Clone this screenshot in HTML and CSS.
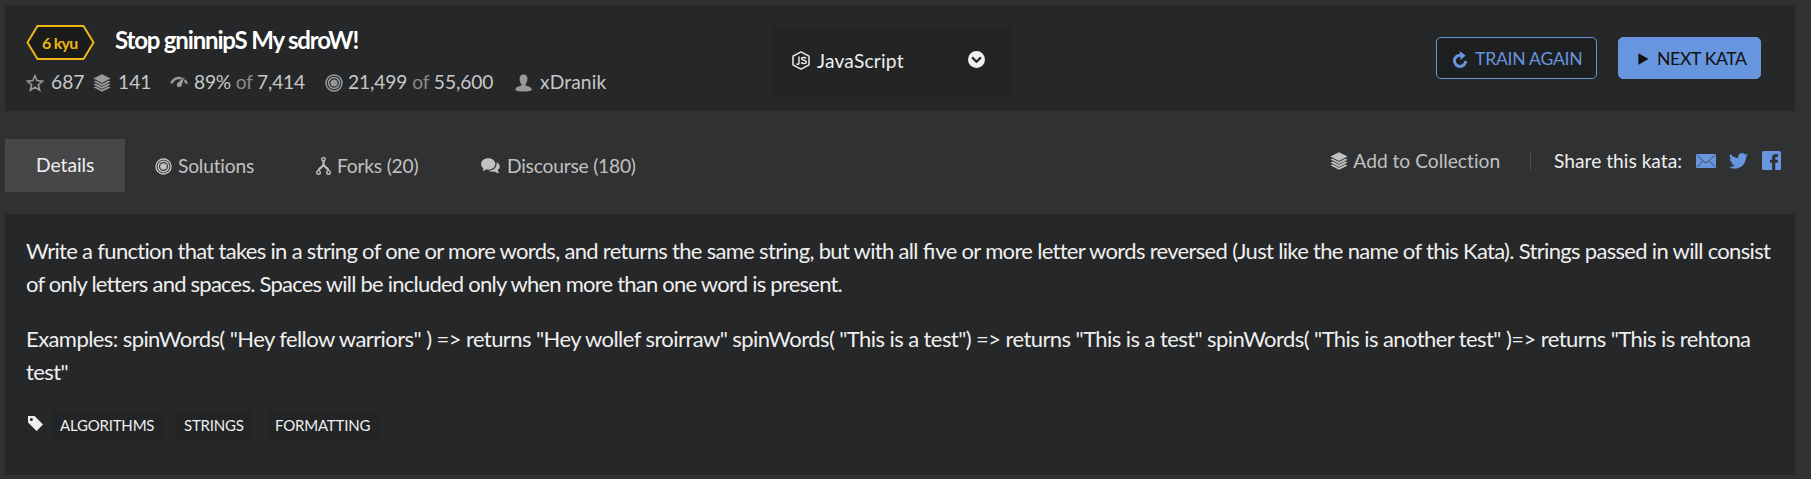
FILE: index.html
```html
<!DOCTYPE html>
<html lang="en">
<head>
<meta charset="utf-8">
<title>Stop gninnipS My sdroW!</title>
<link rel="stylesheet" href="styles.css">
</head>
<body>
<svg class="defs" width="0" height="0" aria-hidden="true">
  <symbol id="layers" viewBox="0 0 18 18">
    <path d="M9 0.3 17.6 4.6 9 9 0.4 4.6Z"/>
    <path d="M0.4 7.3 2.8 6.7 9 9.9 15.2 6.7 17.6 7.7 9 12Z"/>
    <path d="M0.4 10.4 2.8 9.6 9 12.8 15.2 9.6 17.6 10.6 9 14.9Z"/>
    <path d="M0.4 13.3 2.8 12.5 9 15.7 15.2 12.5 17.6 13.5 9 17.8Z"/>
  </symbol>
  <symbol id="target" viewBox="0 0 18 18">
    <g fill="none" stroke="currentColor" stroke-width="1.5"><circle cx="9" cy="9" r="8"/><circle cx="9" cy="9" r="5.5"/></g>
    <circle cx="9" cy="9" r="3.5"/>
  </symbol>
</svg>

<header class="kata">
  <div class="info">
    <div class="title-row">
      <div class="rank">
        <svg class="hex" viewBox="0 0 69 35"><path d="M11.5 1H57.5L67.5 17.5 57.5 34H11.5L1.5 17.5Z"/></svg>
        <span class="rank-text">6 kyu</span>
      </div>
      <h1 class="title">Stop gninnipS My sdroW!</h1>
    </div>
    <div class="stats">
      <span class="stat star"><svg class="ic18" viewBox="0 0 18 18"><path fill="none" stroke="currentColor" stroke-width="1.6" d="M9 1.800 11.100 6.600 16.600 7.100 12.400 10.700 13.700 16.200 9 13.200 4.300 16.200 5.600 10.700 1.400 7.100 6.900 6.600Z"/></svg><b>687</b></span>
      <span class="stat saved"><svg class="ic18"><use href="#layers"/></svg><b>141</b></span>
      <span class="stat rate"><svg class="ic18" viewBox="0 0 18 18"><path d="M0.200 9.600C1.800 4.200 7 1.700 12.200 3.400L10.900 5.600C7.500 4.700 4.400 6 2.800 9.600ZM14.600 2.600 11.600 11.400C10.800 13.700 7.500 13.600 6.900 11.600 6.500 10.300 7 9.500 7.800 8.700ZM14.800 5C16.600 6.200 17.500 7.800 17.900 9.800H15.500C15.300 8.700 14.800 7.900 14 7.200Z"/></svg><b>89% <i>of</i> 7,414</b></span>
      <span class="stat done"><svg class="ic18"><use href="#target"/></svg><b>21,499 <i>of</i> 55,600</b></span>
      <span class="stat author"><svg class="ic18" viewBox="0 0 18 18"><path d="M8.500 0.400C11.200 0.400 12.600 2.300 12.400 5 12.300 7.400 11.600 9 10.600 10V11.600C12.500 12.600 16.300 12.700 16.700 15.400 16.800 16.800 13 17.400 8.500 17.400S0.200 16.800 0.400 15.400C0.700 12.700 4.500 12.600 6.400 11.600V10C5.400 9 4.700 7.400 4.600 5 4.400 2.300 5.800 0.400 8.500 0.400Z"/></svg><b>xDranik</b></span>
    </div>
  </div>
  <div class="language">
    <svg class="node" viewBox="0 0 18 19"><path fill="none" stroke="currentColor" stroke-width="1.500" stroke-linejoin="round" d="M9 0.900 17 5.200V13.800L9 18.100 1 13.800V5.200Z"/><path fill="none" stroke="currentColor" stroke-width="1.400" d="M7 5.600V12.200C7 13.600 5.400 13.500 4.400 12.800M14.200 7.400C13.200 6.100 9.400 6 9.400 7.800 9.400 9.800 14.300 8.800 14.300 11 14.300 13.100 10 13 9.200 11.400"/></svg>
    <span class="lang-name">JavaScript</span>
    <svg class="chev" viewBox="0 0 17 17"><circle cx="8.500" cy="8.500" r="8.500"/><path fill="none" stroke="#222426" stroke-width="2.200" d="M4.100 6.400 8.500 10.700 12.900 6.400"/></svg>
  </div>
  <div class="actions">
    <a class="btn outline"><svg class="redo" viewBox="0 0 16 17"><path fill="none" stroke="currentColor" stroke-width="3" d="M8.400 4.200A5.600 5.600 0 1 0 13.600 10"/><path d="M7.600 0 13.600 4.400 8.600 9Z"/></svg>TRAIN AGAIN</a>
    <a class="btn solid"><svg class="play" viewBox="0 0 11 12"><path d="M0.400 0.200 10.600 6 0.400 11.800Z"/></svg>NEXT KATA</a>
  </div>
</header>

<nav class="bar">
  <a class="tab active">Details</a>
  <a class="tab solutions"><svg class="ic16"><use href="#target"/></svg>Solutions</a>
  <a class="tab forks"><svg class="fork" viewBox="0 0 15 18"><g fill="none" stroke="currentColor" stroke-width="1.400"><circle cx="7.500" cy="2.300" r="1.700"/><circle cx="2.500" cy="15.400" r="1.800"/><circle cx="12.500" cy="15.400" r="1.800"/></g><path fill="none" stroke="currentColor" stroke-width="2.100" d="M7.500 4V8M2.700 13.600C2.700 10.200 7.500 10.800 7.500 7 7.500 10.800 12.300 10.200 12.300 13.600"/></svg>Forks (20)</a>
  <a class="tab discourse"><svg class="chat" viewBox="0 0 19 16"><path d="M7.200 0.300C11.200 0.300 14.300 2.700 14.300 6S11.200 11.600 7.200 11.600C6.400 11.600 5.700 11.500 5 11.400 3.800 12.300 2.700 12.700 1.200 12.800 2 12 2.400 11.300 2.400 10.400 1 9.400 0.100 7.800 0.100 6 0.100 2.700 3.300 0.300 7.200 0.300Z"/><path d="M15.500 4.200C17.500 5.200 18.800 6.700 18.800 8.600 18.800 10 18 11.200 16.800 12.100 16.900 13.300 17.400 14.200 18.200 15.100 16.400 15 15 14.500 13.800 13.500 11.200 14 8.900 13.600 7.200 12.700 12 12.700 16.700 9.400 15.500 4.200Z"/></svg>Discourse (180)</a>
  <div class="share">
    <a class="collect"><svg class="ic18"><use href="#layers"/></svg>Add to Collection</a>
    <span class="divider"></span>
    <span class="share-label">Share this kata:</span>
    <svg class="mail" viewBox="0 0 20 14"><rect width="20" height="14" rx="0.600"/><path fill="none" stroke="#303133" stroke-width="0.700" d="M1 1 8.600 8.200Q10 9.400 11.400 8.200L19 1M1 13 7 6.800M19 13 13 6.800"/></svg>
    <svg class="bird" viewBox="0 0 24 20"><path d="M24 2.400a9.800 9.800 0 0 1-2.800.8A4.900 4.900 0 0 0 23.300.500a9.900 9.900 0 0 1-3.100 1.200A4.900 4.900 0 0 0 11.800 6.200 14 14 0 0 1 1.700 1a4.900 4.900 0 0 0 1.500 6.600A4.900 4.900 0 0 1 1 7v.1a4.900 4.900 0 0 0 3.900 4.800 4.900 4.900 0 0 1-2.200.1 4.900 4.900 0 0 0 4.600 3.400A9.900 9.900 0 0 1 0 17.500 13.900 13.900 0 0 0 7.500 19.700c9.100 0 14.300-7.700 14-14.600A10 10 0 0 0 24 2.400Z"/></svg>
    <svg class="fb" viewBox="0 0 19 19"><path d="M1.600 0H17.400Q19 0 19 1.600V17.400Q19 19 17.400 19H13.300V11.800H15.700L16 8.800H13.300V7.200C13.300 6.300 13.600 5.900 14.600 5.900H16V3.100H13.800C11.100 3.100 10.100 4.600 10.100 6.900V8.800H8V11.800H10.100V19H1.600Q0 19 0 17.400V1.600Q0 0 1.600 0Z"/></svg>
  </div>
</nav>

<main class="panel">
  <p class="text"><span class="l1">Write a function that takes in a string of one or more words, and returns the same string, but with all <span class="lig">fi</span>ve or more letter words reversed (Just like the name of this Kata). Strings passed in will consist</span><br><span class="l2">of only letters and spaces. Spaces will be included only when more than one word is present.</span></p>
  <p class="text">Examples: spinWords( "Hey fellow warriors" ) =&gt; returns "Hey wollef sroirraw" spinWords( "This is a test") =&gt; returns "This is a test" spinWords( "This is another test" )=&gt; returns "This is rehtona<br>test"</p>
  <div class="tags">
    <svg class="tag-ic" viewBox="0 0 15 15"><path fill-rule="evenodd" d="M0 0H6.600L15 8.600 8.600 15 0 6.600ZM3.400 1.900A1.500 1.500 0 1 0 3.400 4.900 1.500 1.500 0 1 0 3.400 1.900Z"/></svg>
    <span class="tag algorithms">ALGORITHMS</span>
    <span class="tag strings">STRINGS</span>
    <span class="tag formatting">FORMATTING</span>
  </div>
</main>
</body>
</html>
```
FILE: styles.css
```css
* { box-sizing: border-box; }
body {
  margin: 0;
  padding: 5px 16px 0 5px;
  height: 479px;
  background: #303133;
  color: #efefef;
  font: 19.2px/24px Lato, sans-serif;
  font-variant-ligatures: no-common-ligatures;
  white-space: nowrap;
  overflow: hidden;
}
svg { fill: currentColor; flex: none; display: block; }
.defs { position: absolute; }
.ic18 { width: 18px; height: 18px; }
.ic16 { width: 17px; height: 17px; }

.kata {
  display: flex;
  height: 106px;
  background: #262729;
}
.info { width: 767px; padding: 20px 0 0 21px; }
.title-row { display: flex; height: 35px; }
.rank { display: grid; width: 69px; height: 35px; color: #ecb613; }
.hex { grid-area: 1 / 1; width: 69px; height: 35px; fill: #1a1c1b; stroke: #ecb613; stroke-width: 2; }
.rank-text {
  grid-area: 1 / 1;
  z-index: 1;
  line-height: 35px;
  padding-left: 16px;
  font-size: 16px;
  font-weight: 700;
  letter-spacing: -0.75px;
}
.title {
  margin: 0 0 0 20px;
  font-size: 24px;
  line-height: 30px;
  font-weight: 700;
  letter-spacing: -1.17px;
  color: #fff;
}
.stats { display: flex; margin-top: 10px; }
.stat { display: flex; gap: 7px; color: #999; }
.stat svg { margin-top: 4px; }
.stat b { font-weight: 400; color: #c8c8c8; }
.stat i { font-style: normal; color: #8a8b8c; }
.star { width: 67px; }
.saved { width: 77px; }
.rate { width: 155px; gap: 6px; letter-spacing: -0.2px; }
.done { width: 190px; gap: 5px; letter-spacing: -0.1px; }
.author { letter-spacing: 0.15px; }

.language {
  display: flex;
  align-items: center;
  width: 240px;
  height: 69px;
  margin-top: 21px;
  padding: 0 27px 0 20px;
  background: #222426;
}
.node { width: 18px; height: 19px; }
.lang-name { margin-left: 7px; flex: 1; letter-spacing: 0.2px; }
.chev { width: 17px; height: 17px; margin-top: -2px; }

.actions { display: flex; gap: 21px; margin: 32px 0 0 424px; }
.btn {
  display: flex;
  align-items: center;
  height: 42px;
  padding-top: 2px;
  border: 1px solid #6795de;
  border-radius: 5px;
  font-size: 17.6px;
}
.outline { width: 161px; padding-left: 15px; background: #1e1f21; color: #6795de; letter-spacing: -0.25px; }
.solid { width: 143px; padding-left: 19px; background: #6795de; color: #111; letter-spacing: -0.35px; }
.redo { width: 16px; height: 17px; margin-right: 7px; }
.play { width: 11px; height: 12px; margin-right: 8px; }

.bar { display: flex; height: 103px; padding-top: 28px; color: #c1c1c1; }
.tab { display: flex; align-items: center; height: 53px; padding-top: 1px; letter-spacing: -0.2px; }
.active {
  width: 120px;
  padding: 0 0 2px 31px;
  background: #464749;
  color: #efefef;
  letter-spacing: 0;
}
.solutions { width: 161px; margin-left: 30px; gap: 6px; }
.forks { width: 165px; gap: 6px; }
.discourse { gap: 7px; }
.fork { width: 15px; height: 18px; }
.chat { width: 19px; height: 16px; }
.share { display: flex; margin: 10px 14px 0 auto; height: 24px; align-items: center; }
.collect { display: flex; align-items: center; gap: 5px; }
.divider { width: 1px; height: 17px; margin: 0 23px 0 30px; background: #4c4e50; }
.share-label { color: #efefef; margin-right: 14px; }
.mail, .bird, .fb { color: #6795de; }
.mail { width: 20px; height: 14px; }
.bird { width: 19px; height: 16px; margin: 0 14px 0 13px; }
.fb { width: 19px; height: 19px; margin-top: -2px; }

.panel { height: 261px; padding: 20px 0 0 21px; background: #262729; }
.text { margin: 0 0 22px; font-size: 22px; line-height: 33px; letter-spacing: -0.577px; }
.l1 { letter-spacing: -0.685px; }
.l2 { letter-spacing: -0.765px; }
.lig { letter-spacing: 0; font-variant-ligatures: common-ligatures; }
.tags { display: flex; height: 31px; }
.tag-ic { width: 15px; height: 15px; margin: 6px 9px 0 2px; }
.tag {
  height: 31px;
  padding-left: 8px;
  margin-right: 14px;
  border-radius: 6px;
  background: #222426;
  font-size: 15px;
  line-height: 31px;
  letter-spacing: -0.2px;
}
.algorithms { width: 110px; }
.strings { width: 77px; }
.formatting { width: 111px; }
```
